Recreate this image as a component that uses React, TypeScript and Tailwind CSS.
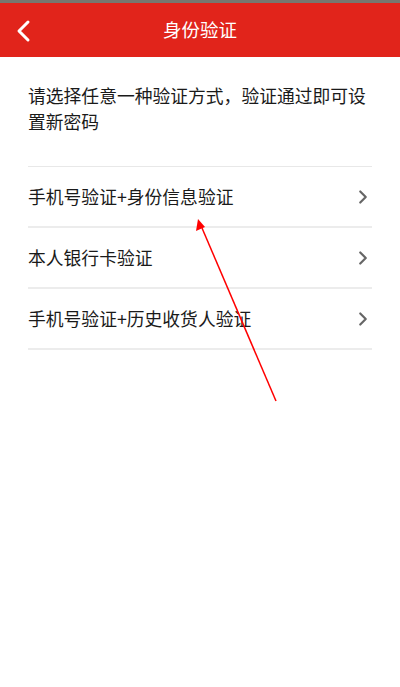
import { ChevronRight } from 'lucide-react';

const methods = ['手机号验证+身份信息验证', '本人银行卡验证', '手机号验证+历史收货人验证'];

const font = { fontFamily: '"Noto Sans CJK SC", "Liberation Sans", sans-serif' };

export default function App() {
  return (
    <div className="relative w-[400px] h-[687px] bg-white overflow-hidden" style={font}>
      <div className="h-[3px] bg-[#77776f]" />
      <header className="relative h-[54px] bg-[#e1241b] flex items-center justify-center">
        <button className="absolute left-[14px] top-[16px] text-white">
          <svg width="20" height="24" viewBox="0 0 20 24" fill="none">
            <path d="M14 3 L5 12 L14 21" stroke="white" strokeWidth="3" strokeLinecap="round" strokeLinejoin="round" />
          </svg>
        </button>
        <h1 className="text-white text-[18.5px]">身份验证</h1>
      </header>

      <div className="px-[28px]">
        <p className="pt-[25px] pb-[32px] text-[17.8px] leading-[26px] text-[#1a1a1a]">
          请选择任意一种验证方式，验证通过即可设置新密码
        </p>
        <ul className="border-t border-[#e8e8e8]">
          {methods.map((m) => (
            <li
              key={m}
              className="h-[61px] flex items-center justify-between border-b-2 border-[#ececec] text-[17.8px] text-[#1a1a1a]"
            >
              <span>{m}</span>
              <ChevronRight className="w-[22px] h-[22px] text-[#666] mr-[-2px]" strokeWidth={2.4} />
            </li>
          ))}
        </ul>
      </div>

      {/* annotation arrow */}
      <svg className="absolute left-0 top-0 pointer-events-none" width="400" height="687">
        <line x1="276" y1="401" x2="202" y2="228" stroke="#ff0000" strokeWidth="1.5" />
        <polygon points="198,219 196,231 205,227" fill="#ff0000" />
      </svg>
    </div>
  );
}
